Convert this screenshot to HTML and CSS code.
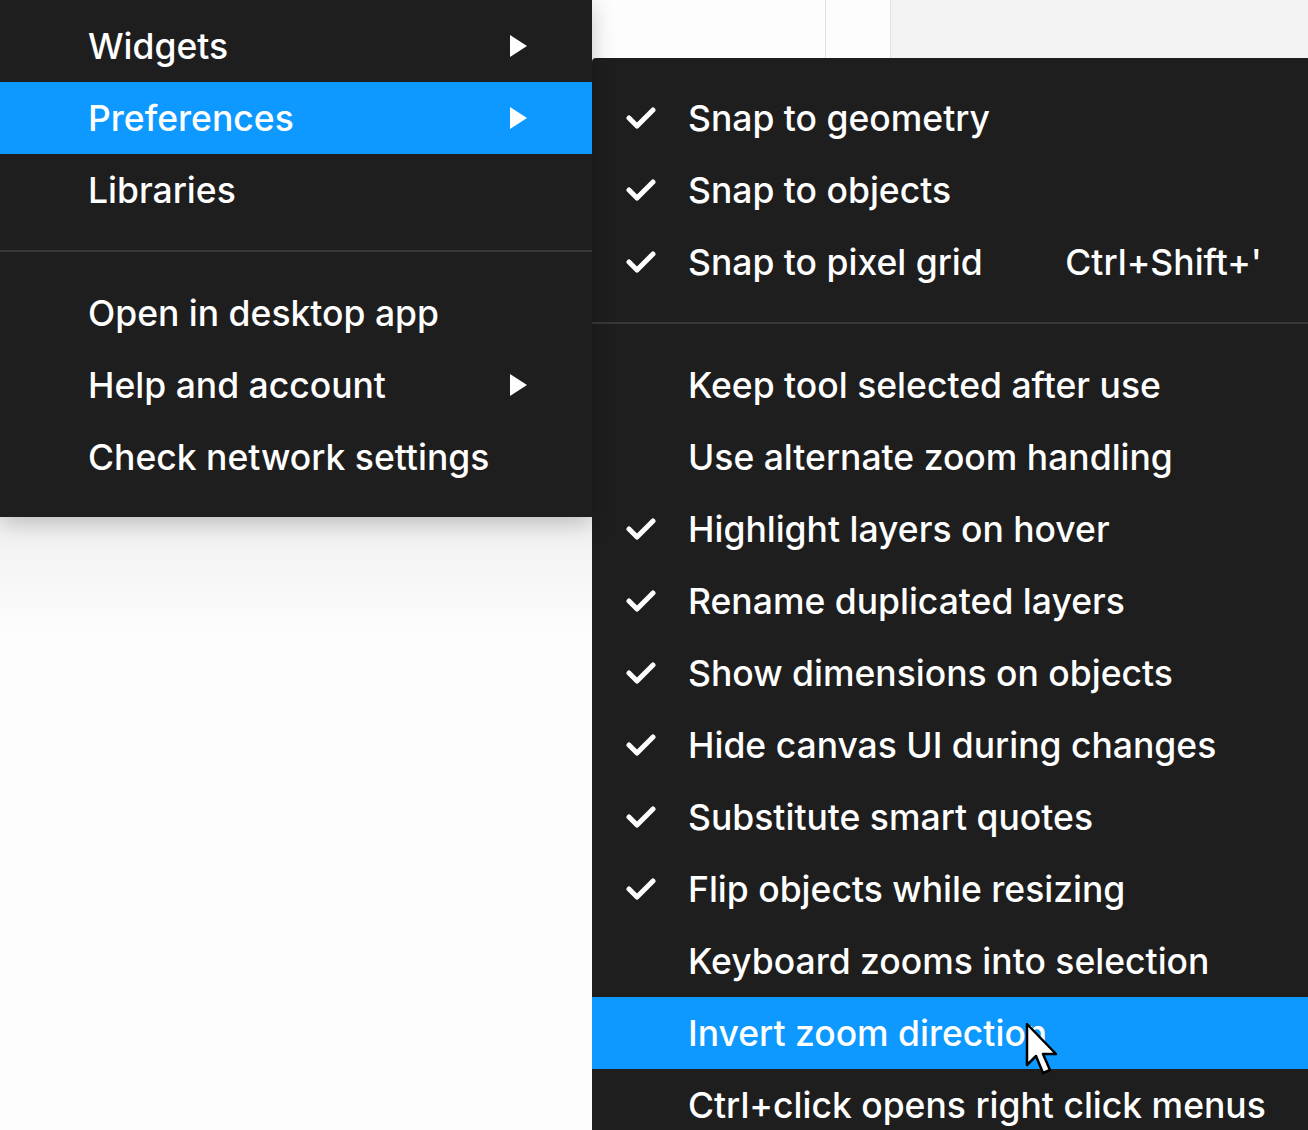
FILE: index.html
```html
<!DOCTYPE html>
<html lang="en">
<head>
    <meta charset="UTF-8">
    <title>Menu - Preferences</title>
    <link rel="stylesheet" href="styles.css">
</head>
<body>
<div class="stage">
    <div class="left-col">
        <div class="menu main-menu">
            <div class="item">Widgets <span class="arrow"></span></div>
            <div class="item active">Preferences <span class="arrow"></span></div>
            <div class="item">Libraries</div>
            <div class="sep"></div>
            <div class="item">Open in desktop app</div>
            <div class="item">Help and account <span class="arrow"></span></div>
            <div class="item">Check network settings</div>
        </div>
        <div class="canvas"></div>
    </div>
    <div class="right-col">
        <div class="top-strip">
            <div class="strip-a"></div>
            <div class="strip-b"></div>
            <div class="strip-c"></div>
        </div>
        <div class="menu sub-menu">
            <div class="item checked"><span class="check"></span>Snap to geometry</div>
            <div class="item checked"><span class="check"></span>Snap to objects</div>
            <div class="item checked"><span class="check"></span>Snap to pixel grid <span class="shortcut">Ctrl+Shift+'</span></div>
            <div class="sep"></div>
            <div class="item"><span class="check"></span>Keep tool selected after use</div>
            <div class="item"><span class="check"></span>Use alternate zoom handling</div>
            <div class="item checked"><span class="check"></span>Highlight layers on hover</div>
            <div class="item checked"><span class="check"></span>Rename duplicated layers</div>
            <div class="item checked"><span class="check"></span>Show dimensions on objects</div>
            <div class="item checked"><span class="check"></span>Hide canvas UI during changes</div>
            <div class="item checked"><span class="check"></span>Substitute smart quotes</div>
            <div class="item checked"><span class="check"></span>Flip objects while resizing</div>
            <div class="item"><span class="check"></span>Keyboard zooms into selection</div>
            <div class="item active"><span class="check"></span>Invert zoom direction
                <svg class="cursor" width="40" height="60" viewBox="0 0 40 60">
                    <path d="M3 3 L3 44 L12 35 L19 52 L26 49 L19 33 L32 33 Z" fill="#fff" stroke="#000" stroke-width="2.5" stroke-linejoin="round"/>
                </svg>
            </div>
            <div class="item"><span class="check"></span>Ctrl+click opens right click menus</div>
        </div>
    </div>
</div>
</body>
</html>
```

FILE: styles.css
```css
body {
    margin: 0;
    padding: 0;
    background-color: #fdfdfd;
    font-family: Inter, "Noto Sans", sans-serif;
    overflow: hidden;
}
.stage {
    display: flex;
    width: 1308px;
    height: 1130px;
}
.left-col {
    width: 592px;
    flex-shrink: 0;
    display: flex;
    flex-direction: column;
}
.right-col {
    flex: 1;
    display: flex;
    flex-direction: column;
    min-height: 0;
    min-width: 0;
}
.menu {
    background-color: #1e1e1e;
    color: #fff;
    font-size: 35.5px;
    font-weight: 500;
    white-space: nowrap;
}
.main-menu {
    padding: 10px 0 24px;
    position: relative;
    z-index: 2;
    box-shadow: 0 6px 22px rgba(0, 0, 0, 0.22);
}
.canvas {
    flex: 1;
    background: linear-gradient(#f0f0f1, #fdfdfd 120px);
}
.item {
    height: 72px;
    display: flex;
    align-items: center;
    position: relative;
    flex-shrink: 0;
}
.main-menu .item {
    padding: 0 65px 0 88px;
    justify-content: space-between;
}
.item.active {
    background-color: #0d99ff;
}
.arrow {
    width: 0;
    height: 0;
    border-top: 11px solid transparent;
    border-bottom: 11px solid transparent;
    border-left: 17px solid #fff;
}
.sep {
    height: 2px;
    background-color: #383838;
    margin: 24px 0 25px;
    flex-shrink: 0;
}
.top-strip {
    height: 58px;
    display: flex;
    flex-shrink: 0;
}
.strip-a {
    width: 233px;
    background-color: #fdfdfd;
    border-right: 1px solid #e2e2e2;
}
.strip-b {
    width: 64px;
    background-color: #fdfdfd;
    border-right: 1px solid #e2e2e2;
}
.strip-c {
    flex: 1;
    background-color: #f3f3f4;
}
.sub-menu {
    flex: 1;
    padding-top: 24px;
    border-top-left-radius: 4px;
    overflow: hidden;
}
.sub-menu .item {
    padding: 0 46px 0 34px;
}
.check {
    width: 30px;
    height: 22px;
    margin-right: 32px;
    flex-shrink: 0;
}
.checked .check {
    background: no-repeat center/30px 22px url("data:image/svg+xml,%3Csvg xmlns='http://www.w3.org/2000/svg' viewBox='0 0 30 22'%3E%3Cpath d='M3 11 L11 19 L27 3' fill='none' stroke='%23fff' stroke-width='5' stroke-linecap='round' stroke-linejoin='round'/%3E%3C/svg%3E");
}
.shortcut {
    margin-left: auto;
}
.cursor {
    position: absolute;
    left: 432px;
    top: 24px;
}
```
